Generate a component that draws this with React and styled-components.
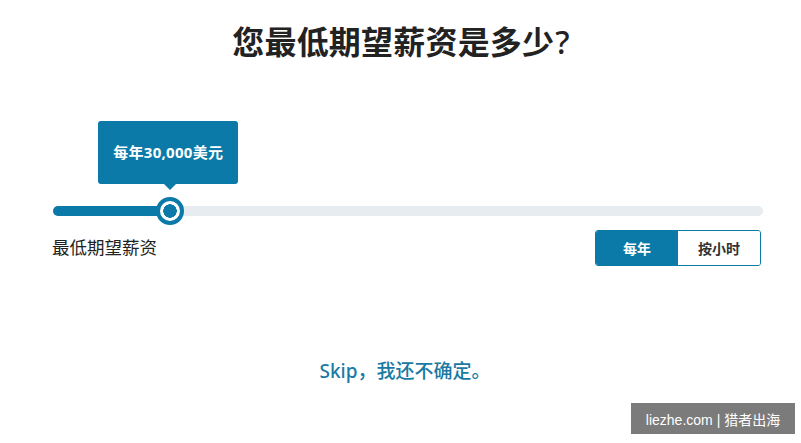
import React, { useState } from "react";
import styled, { createGlobalStyle } from "styled-components";

const BLUE = "#0b7aa8";
const FONT = `"Noto Sans", "Noto Sans CJK SC", sans-serif`;

const GlobalStyle = createGlobalStyle`
  html, body {
    margin: 0;
    padding: 0;
    background: #fff;
    font-family: ${FONT};
    color: #222;
  }
`;

const MIN = 0;
const MAX = 180000;

export default function App() {
  const [salary] = useState(30000);
  const [period, setPeriod] = useState("year");
  const pct = ((salary - MIN) / (MAX - MIN)) * 100 - 0.15;

  return (
    <Page>
      <GlobalStyle />
      <Title>
        您最低期望薪资是多少<Question>?</Question>
      </Title>

      <SliderArea>
        <Track>
          <Fill style={{ width: `${pct}%` }} />
          <Anchor style={{ left: `${pct}%` }}>
            <Bubble>每年{salary.toLocaleString("en-US")}美元</Bubble>
            <Thumb />
          </Anchor>
        </Track>
      </SliderArea>

      <Row>
        <Label>最低期望薪资</Label>
        <Toggle>
          <ToggleButton $active={period === "year"} onClick={() => setPeriod("year")}>
            每年
          </ToggleButton>
          <ToggleButton $active={period === "hour"} onClick={() => setPeriod("hour")}>
            按小时
          </ToggleButton>
        </Toggle>
      </Row>

      <Skip href="#">Skip，我还不确定。</Skip>

      <Watermark>liezhe.com | 猎者出海</Watermark>
    </Page>
  );
}

const Page = styled.div`
  position: relative;
  height: 443px;
  padding: 0 38px 0 53px;
  box-sizing: border-box;
  display: flex;
  flex-direction: column;
  overflow: hidden;
`;

const Title = styled.h1`
  margin: 20px 0 0;
  font-size: 32px;
  line-height: 44px;
  font-weight: 700;
  text-align: center;
  color: #222;
  letter-spacing: 0.2px;
  padding-right: 14px;
`;

const Question = styled.span`
  font-weight: 500;
  margin-left: 1px;
`;

const SliderArea = styled.div`
  padding-top: 142px;
`;

const Track = styled.div`
  position: relative;
  height: 10px;
  border-radius: 5px;
  background: #e6ecf0;
`;

const Fill = styled.div`
  height: 100%;
  border-radius: 5px;
  background: ${BLUE};
`;

const Anchor = styled.div`
  position: absolute;
  top: 5px;
  width: 0;
  height: 0;
`;

const Thumb = styled.div`
  position: absolute;
  left: -14px;
  top: -14px;
  width: 20px;
  height: 20px;
  border-radius: 50%;
  border: 4px solid ${BLUE};
  background: radial-gradient(circle, ${BLUE} 0 6.5px, #fff 7px);
`;

const Bubble = styled.div`
  position: absolute;
  bottom: 27px;
  left: -72px;
  width: 140px;
  height: 63px;
  border-radius: 3px;
  background: ${BLUE};
  color: #fff;
  font-size: 15px;
  font-weight: 700;
  letter-spacing: 0.3px;
  display: flex;
  align-items: center;
  justify-content: center;
  padding-bottom: 2px;
  box-sizing: border-box;

  &::after {
    content: "";
    position: absolute;
    left: 50%;
    bottom: -6px;
    margin-left: -4px;
    border-left: 6px solid transparent;
    border-right: 6px solid transparent;
    border-top: 6px solid ${BLUE};
  }
`;

const Row = styled.div`
  margin-top: 14px;
  display: flex;
  justify-content: space-between;
  align-items: flex-start;
  padding-right: 2px;
`;

const Label = styled.div`
  font-size: 17.5px;
  line-height: 24px;
  margin-top: 5px;
  margin-left: -1px;
  color: #222;
`;

const Toggle = styled.div`
  display: flex;
  width: 166px;
  height: 36px;
  border: 1px solid ${BLUE};
  border-radius: 3px;
  overflow: hidden;
  box-sizing: border-box;
`;

const ToggleButton = styled.button`
  flex: 1;
  border: none;
  margin: 0;
  padding: 0;
  font-family: ${FONT};
  font-size: 14px;
  font-weight: 700;
  cursor: pointer;
  background: ${(p) => (p.$active ? BLUE : "#fff")};
  color: ${(p) => (p.$active ? "#fff" : "#333")};
`;

const Skip = styled.a`
  margin-top: 92px;
  align-self: center;
  margin-left: -6px;
  font-size: 19px;
  line-height: 26px;
  font-weight: 500;
  color: #1a7aa2;
  text-decoration: none;
`;

const Watermark = styled.div`
  position: absolute;
  right: 6px;
  bottom: 9px;
  width: 164px;
  height: 31px;
  background: #7b7b7b;
  color: #fff;
  font-family: "Liberation Sans", "Noto Sans CJK SC", sans-serif;
  font-size: 14px;
  display: flex;
  align-items: center;
  justify-content: center;
`;
